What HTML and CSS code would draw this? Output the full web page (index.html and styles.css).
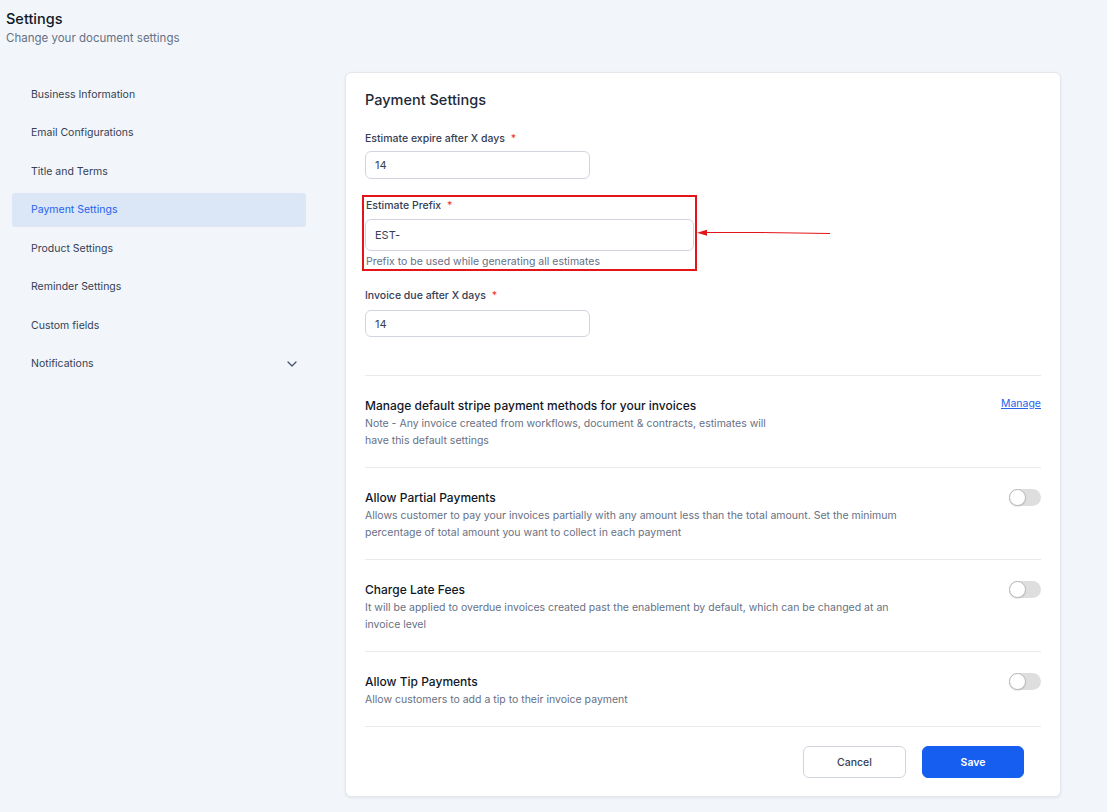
FILE: index.html
```html
<!DOCTYPE html>
<html lang="en">
<head>
<meta charset="utf-8">
<title>Settings</title>
<link rel="stylesheet" href="styles.css">
</head>
<body>
<div class="page">
  <header class="page-header">
    <h1 class="page-title">Settings</h1>
    <p class="page-sub">Change your document settings</p>
  </header>
  <div class="layout">
    <nav class="sidebar">
      <a class="nav-item">Business Information</a>
      <a class="nav-item">Email Configurations</a>
      <a class="nav-item">Title and Terms</a>
      <a class="nav-item active">Payment Settings</a>
      <a class="nav-item">Product Settings</a>
      <a class="nav-item">Reminder Settings</a>
      <a class="nav-item">Custom fields</a>
      <a class="nav-item has-chevron">Notifications
        <svg class="chevron" width="10" height="6" viewBox="0 0 10 6"><path d="M1 1l4 4 4-4" fill="none" stroke="#475467" stroke-width="1.3" stroke-linecap="round" stroke-linejoin="round"/></svg>
      </a>
    </nav>
    <main class="card">
      <h2 class="card-title">Payment Settings</h2>
      <div class="field field-first">
        <label class="label">Estimate expire after X days <span class="req">*</span></label>
        <div class="input input-short">14</div>
      </div>
      <div class="field field-highlight">
        <label class="label">Estimate Prefix <span class="req">*</span></label>
        <div class="input input-long">EST-</div>
        <p class="helper">Prefix to be used while generating all estimates</p>
        <svg class="arrow" width="136" height="10" viewBox="0 0 136 10"><path d="M8 4.5 L64 4.5 L133 5.5" fill="none" stroke="#e3151a" stroke-width="1.2"/><polygon points="0,4.8 10,1.8 10,7.8" fill="#e3151a"/></svg>
      </div>
      <div class="field field-last">
        <label class="label">Invoice due after X days <span class="req">*</span></label>
        <div class="input input-short">14</div>
      </div>

      <section class="opt">
        <div class="opt-text">
          <h3 class="opt-title">Manage default stripe payment methods for your invoices</h3>
          <p class="opt-desc narrow">Note - Any invoice created from workflows, document &amp; contracts, estimates will have this default settings</p>
        </div>
        <a class="manage-link">Manage</a>
      </section>
      <section class="opt">
        <div class="opt-text">
          <h3 class="opt-title">Allow Partial Payments</h3>
          <p class="opt-desc">Allows customer to pay your invoices partially with any amount less than the total amount. Set the minimum percentage of total amount you want to collect in each payment</p>
        </div>
        <span class="toggle"><span class="knob"></span></span>
      </section>
      <section class="opt">
        <div class="opt-text">
          <h3 class="opt-title">Charge Late Fees</h3>
          <p class="opt-desc">It will be applied to overdue invoices created past the enablement by default, which can be changed at an invoice level</p>
        </div>
        <span class="toggle"><span class="knob"></span></span>
      </section>
      <section class="opt">
        <div class="opt-text">
          <h3 class="opt-title">Allow Tip Payments</h3>
          <p class="opt-desc">Allow customers to add a tip to their invoice payment</p>
        </div>
        <span class="toggle"><span class="knob"></span></span>
      </section>
      <div class="footer">
        <button class="btn btn-cancel">Cancel</button>
        <button class="btn btn-save">Save</button>
      </div>
    </main>
  </div>
</div>
</body>
</html>
```
FILE: styles.css
```css
* { box-sizing: border-box; }
html, body { margin: 0; padding: 0; }
body {
  background: #f2f6fa;
  font-family: Inter, "Noto Sans", sans-serif;
  color: #101828;
  width: 1107px;
  height: 812px;
  overflow: hidden;
}
.page { padding: 9px 46px 0 6px; }
.page-title {
  margin: 0;
  font-size: 14.5px;
  line-height: 20px;
  font-weight: 500;
  color: #101828;
}
.page-sub {
  margin: 1px 0 0;
  font-size: 11.5px;
  line-height: 16px;
  color: #667085;
}
.layout {
  display: flex;
  align-items: flex-start;
  margin-top: 26px;
}
.sidebar {
  width: 294px;
  margin-left: 6px;
  margin-right: 39px;
  padding-top: 5px;
  display: flex;
  flex-direction: column;
  gap: 4.5px;
}
.nav-item {
  display: flex;
  align-items: center;
  justify-content: space-between;
  height: 34px;
  padding: 0 9px 0 19px;
  font-size: 10.5px;
  color: #344054;
  border-radius: 3px;
}
.nav-item.active {
  background: #dbe7f7;
  color: #2563eb;
}
.chevron { display: block; }

.card {
  position: relative;
  width: 716px;
  height: 725px;
  background: #fff;
  border: 1px solid #e4e7ec;
  border-radius: 6px;
  box-shadow: 0 1px 3px rgba(16, 24, 40, 0.08);
  padding: 17px 19px 0 19px;
}
.card-title {
  margin: 0;
  font-size: 14.5px;
  line-height: 20px;
  font-weight: 500;
  color: #1d2939;
}
.field { margin-top: 20px; }
.label {
  display: block;
  font-size: 10.5px;
  line-height: 16px;
  font-weight: 500;
  color: #344054;
}
.field-first .label { padding-top: 1px; line-height: 16px; }
.field-first .input { margin-top: 4px; }
.req { color: #f04438; margin-left: 3px; }
.input {
  margin-top: 5px;
  height: 28px;
  border: 1px solid #d0d5dd;
  border-radius: 6px;
  padding: 0 9px;
  display: flex;
  align-items: center;
  font-size: 11px;
  color: #344054;
}
.input-short { width: 225px; }
.input-long { width: 329px; height: 32px; margin-top: 5px; }
.field-highlight {
  position: relative;
  width: 335px;
  margin-top: 16px;
  margin-left: -3px;
  border: 2px solid #e3151a;
  padding: 1px 1px 0 1px;
}
.field-highlight .label { padding-left: 1px; }
.helper {
  margin: 4px 0 0;
  padding-left: 1px;
  font-size: 10.5px;
  line-height: 14px;
  color: #667085;
}
.arrow {
  position: absolute;
  left: calc(100% + 2px);
  top: 31px;
}
.field-last { margin-top: 17px; }
.field-last .input { margin-top: 6px; height: 27px; }

.opt {
  display: flex;
  justify-content: space-between;
  align-items: flex-start;
  border-top: 1px solid #e8eaed;
  padding: 21px 0 18px;
}
.field-last + .opt { margin-top: 38px; }
.opt-title {
  margin: 0;
  font-size: 12px;
  line-height: 18px;
  font-weight: 500;
  color: #101828;
}
.opt-desc {
  margin: 0;
  font-size: 10.5px;
  line-height: 17px;
  color: #667085;
  max-width: 545px;
}
.opt-desc.narrow { max-width: 410px; }
.manage-link {
  font-size: 10.5px;
  line-height: 16px;
  color: #2563eb;
  text-decoration: underline;
  margin-top: -1px;
}
.toggle {
  position: relative;
  width: 32px;
  height: 17px;
  border-radius: 9px;
  background: #dedede;
  margin-top: 0;
  flex: none;
}
.knob {
  position: absolute;
  left: 0;
  top: 0;
  width: 17px;
  height: 17px;
  border-radius: 50%;
  background: #fff;
  border: 1px solid #b8b8b8;
  box-shadow: 0 1px 1px rgba(0,0,0,0.1);
}
.footer {
  display: flex;
  justify-content: flex-end;
  gap: 16px;
  border-top: 1px solid #e8eaed;
  padding: 19px 17px 0 0;
}
.btn {
  height: 32px;
  border-radius: 6px;
  font-family: Inter, "Noto Sans", sans-serif;
  font-size: 10.5px;
  cursor: pointer;
}
.btn-cancel {
  width: 103px;
  background: #fff;
  border: 1px solid #d0d5dd;
  color: #344054;
  font-weight: 500;
}
.btn-save {
  width: 102px;
  background: #155eef;
  border: 1px solid #155eef;
  color: #fff;
  font-weight: 600;
}
```
